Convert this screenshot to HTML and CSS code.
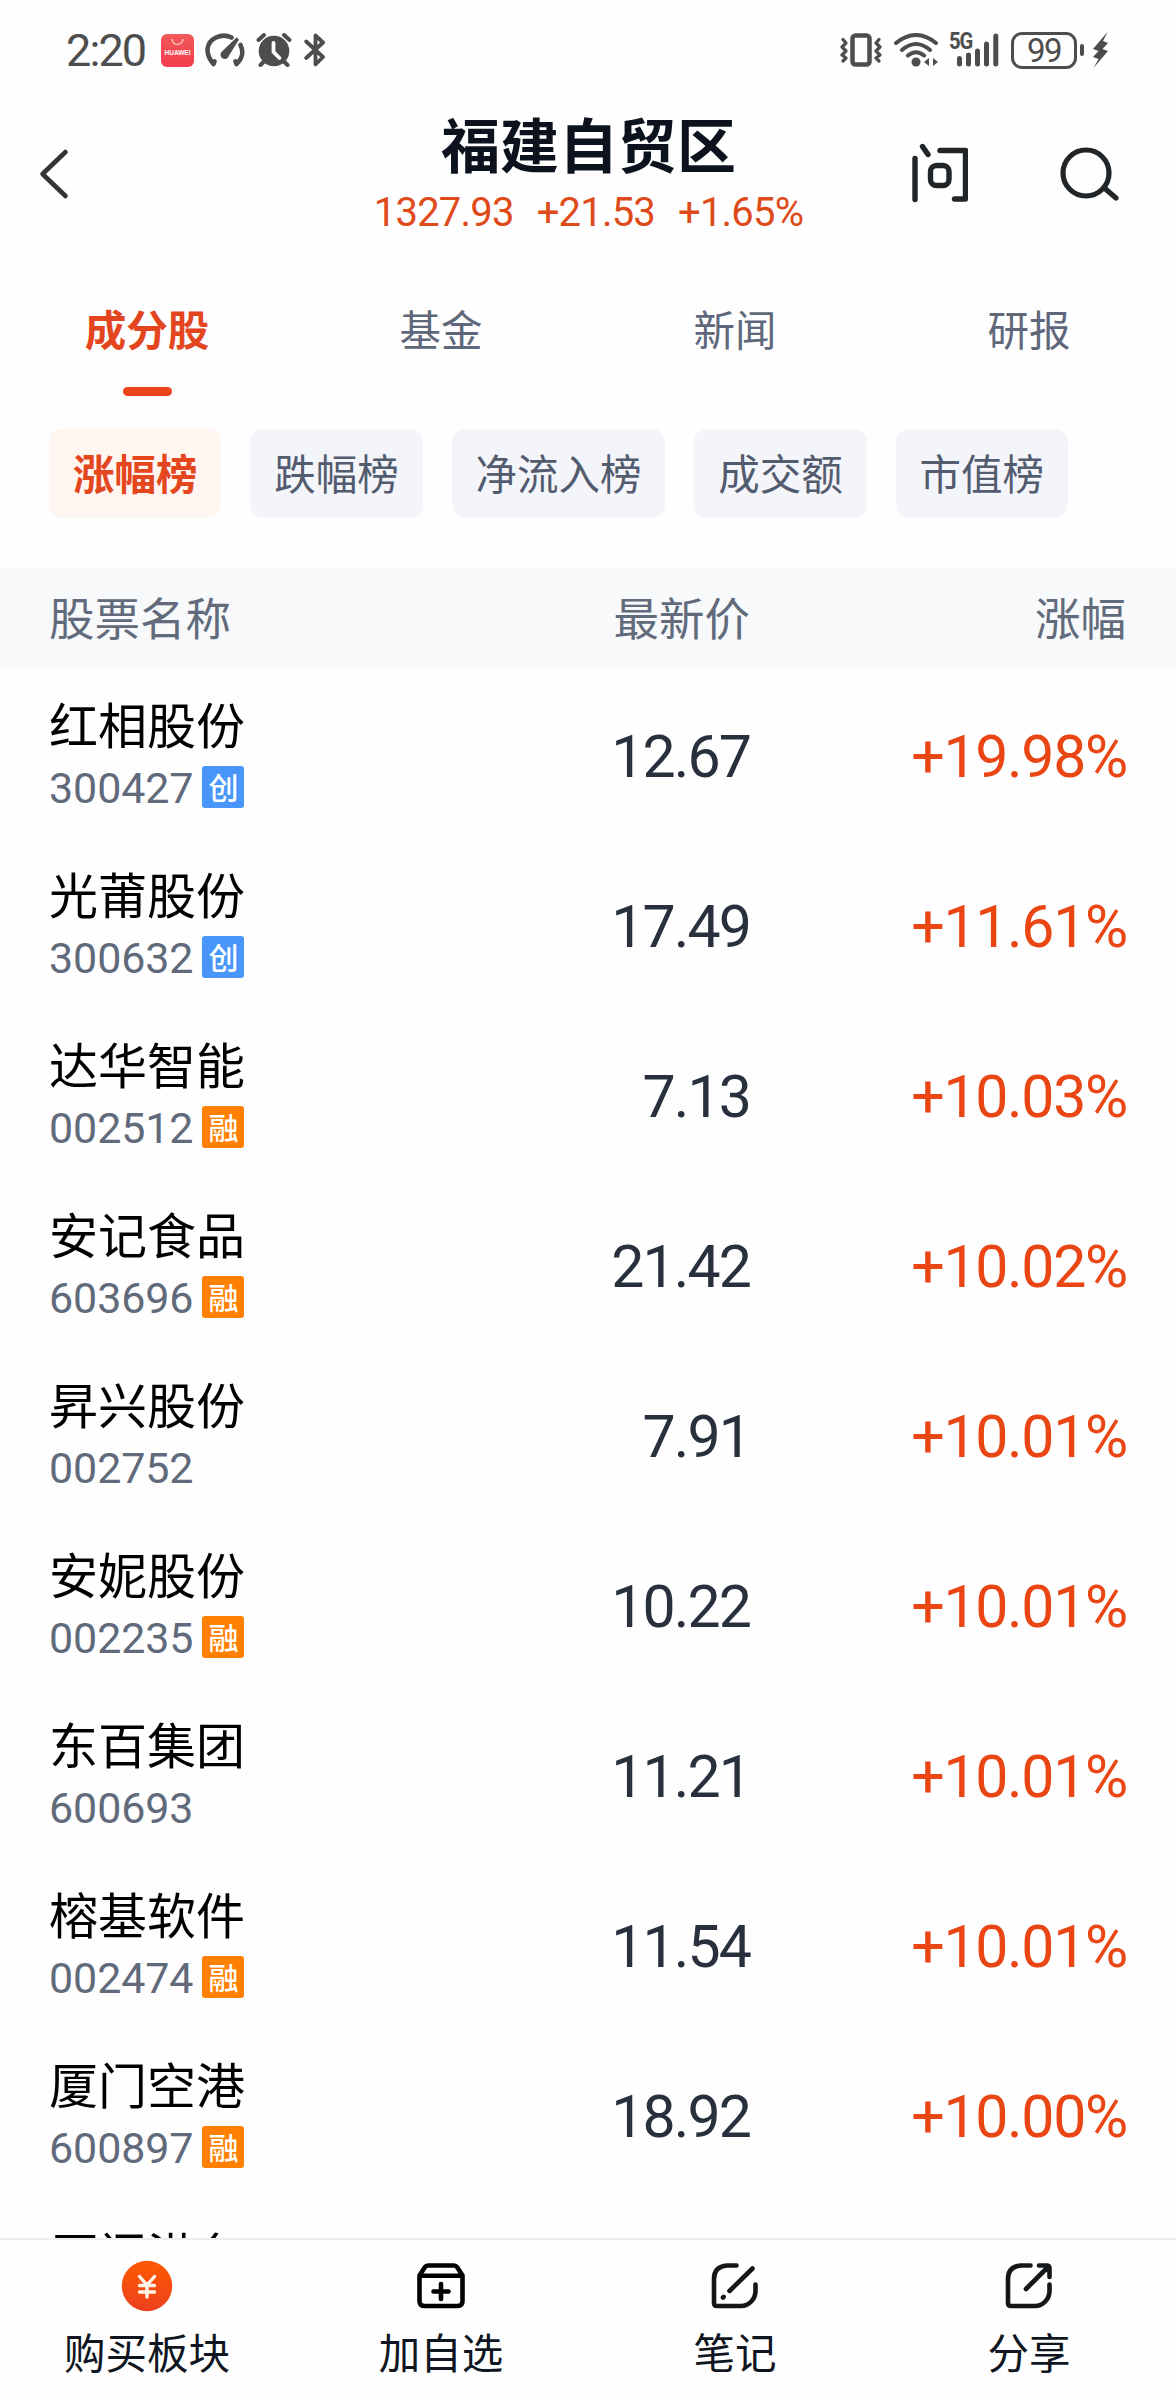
FILE: index.html
```html
<!DOCTYPE html>
<html lang="zh-CN">
<head>
<meta charset="utf-8">
<title>福建自贸区</title>
<link rel="stylesheet" href="styles.css">
</head>
<body>
<div class="screen">
  <div class="status">
    <div class="status-left">
      <span class="clock">2:20</span>
      <div class="appicon"><svg width="33" height="12" viewBox="0 0 33 12"><path d="M11 5a5.5 5.5 0 0 0 11 0" fill="none" stroke="#ffd9d6" stroke-width="1.2"/></svg><span>HUAWEI</span></div>
      <svg class="gauge" width="40" height="34" viewBox="0 0 40 34"><g fill="none" stroke="#4d4d4d" stroke-width="4.6" stroke-linecap="round"><path d="M8.500 31C-1 20 1.500 9 11 4.500C17 1.800 22 2.200 26.500 4.500M35.500 12C39 19 37 26 31.500 31M8.500 31l1-2.500M31.500 31l-1-2.500"/></g><path d="M31.500 4.500l2.500 2L24 22.500a4.300 4.300 0 1 1-6.500-4.500Z" fill="#4d4d4d"/></svg>
      <svg class="alarm" width="36" height="34" viewBox="0 0 36 34"><circle cx="18" cy="18" r="15.300" fill="#4d4d4d"/><g fill="none" stroke="#4d4d4d" stroke-width="4" stroke-linecap="round"><path d="M2.500 7l5.500-5M33.500 7l-5.500-5M7.500 29l-3 3M28.500 29l3 3"/></g><path d="M17.500 10v9l6 6" fill="none" stroke="#fff" stroke-width="3.800" stroke-linecap="round" stroke-linejoin="round"/></svg>
      <svg class="bt" width="22" height="34" viewBox="0 0 22 34"><path d="M2.200 8.500L19 24l-7.500 7.500V2.500L19 9.500L2.200 25" fill="none" stroke="#4d4d4d" stroke-width="3.800" stroke-linecap="round" stroke-linejoin="round"/></svg>
    </div>
    <div class="status-right">
      <svg width="42" height="34" viewBox="0 0 42 34"><g fill="none" stroke="#4d4d4d" stroke-width="3.200" stroke-linecap="round" stroke-linejoin="round"><path d="M3 6.500l3 3.500-4 4 4 4-4 4 4 3-3 3M39 6.500l-3 3.500 4 4-4 4 4 4-4 3 3 3"/></g><rect x="12.500" y="2.500" width="17" height="29" rx="3" fill="none" stroke="#4d4d4d" stroke-width="4.500"/></svg>
      <svg class="wifi" width="44" height="34" viewBox="0 0 44 34"><g fill="none" stroke="#4d4d4d" stroke-width="4" stroke-linecap="round"><path d="M2 10Q22-6 42 10M8 17Q22 5 36 17M14 22.500Q22 16 30 22.500"/></g><circle cx="22" cy="29" r="4.500" fill="#4d4d4d"/><path d="M30 29l5-4v8zM44 29l-5-4v8z" fill="#4d4d4d"/></svg>
      <div class="signal"><span>5G</span><svg width="50" height="34" viewBox="0 0 50 34"><g stroke="#4d4d4d" stroke-width="5" stroke-linecap="round"><path d="M10.500 25.500v5.500M19.500 22v9M28.500 18v13M37.500 11v20M46.800 3v28"/></g></svg></div>
      <div class="battery">99</div>
      <svg width="4" height="12"><rect width="4" height="12" rx="2" fill="#4d4d4d"/></svg>
      <svg class="bolt" width="17" height="38" viewBox="0 0 17 38"><path d="M15.500 1L1 18l5.500 2L1 26l5.500 2L1.500 37 16 20l-5.500-2 5.500-6-5-2z" fill="#4d4d4d"/></svg>
    </div>
  </div>

  <header class="topbar">
    <svg class="back" width="30" height="54" viewBox="0 0 30 54"><path d="M26.500 5L3.500 27l23 22" fill="none" stroke="#333" stroke-width="4.600" stroke-linecap="round" stroke-linejoin="round"/></svg>
    <div class="heading">
      <h1>福建自贸区</h1>
      <p class="quote"><span>1327.93</span><span>+21.53</span><span>+1.65%</span></p>
    </div>
    <div class="actions">
      <svg width="56" height="62" viewBox="0 0 56 62"><g fill="none" stroke="#212528" stroke-width="5.400" stroke-linecap="round" stroke-linejoin="round"><path d="M3 16.500v41M10.500 4.500l5.500 8M28 8.500h25.500V57H42.500"/><rect x="18.500" y="23.500" width="18.500" height="20" rx="6"/></g></svg>
      <svg width="60" height="62" viewBox="0 0 60 62"><g fill="none" stroke="#212528" stroke-width="5.200" stroke-linecap="round"><circle cx="27" cy="31" r="23"/><path d="M46.500 47l10.500 9"/></g></svg>
    </div>
  </header>

  <nav class="tabs">
    <div class="tab active">成分股</div><div class="tab">基金</div><div class="tab">新闻</div><div class="tab">研报</div>
  </nav>

  <div class="chips">
    <div class="chip active">涨幅榜</div><div class="chip">跌幅榜</div><div class="chip">净流入榜</div><div class="chip">成交额</div><div class="chip">市值榜</div>
  </div>

  <div class="columns"><span>股票名称</span><span>最新价</span><span>涨幅</span></div>

  <main class="list">
    <div class="row"><div class="stock"><div class="name">红相股份</div><div class="code">300427<i class="tag cyb">创</i></div></div><div class="price">12.67</div><div class="change">+19.98%</div></div>
    <div class="row"><div class="stock"><div class="name">光莆股份</div><div class="code">300632<i class="tag cyb">创</i></div></div><div class="price">17.49</div><div class="change">+11.61%</div></div>
    <div class="row"><div class="stock"><div class="name">达华智能</div><div class="code">002512<i class="tag">融</i></div></div><div class="price">7.13</div><div class="change">+10.03%</div></div>
    <div class="row"><div class="stock"><div class="name">安记食品</div><div class="code">603696<i class="tag">融</i></div></div><div class="price">21.42</div><div class="change">+10.02%</div></div>
    <div class="row"><div class="stock"><div class="name">昇兴股份</div><div class="code">002752</div></div><div class="price">7.91</div><div class="change">+10.01%</div></div>
    <div class="row"><div class="stock"><div class="name">安妮股份</div><div class="code">002235<i class="tag">融</i></div></div><div class="price">10.22</div><div class="change">+10.01%</div></div>
    <div class="row"><div class="stock"><div class="name">东百集团</div><div class="code">600693</div></div><div class="price">11.21</div><div class="change">+10.01%</div></div>
    <div class="row"><div class="stock"><div class="name">榕基软件</div><div class="code">002474<i class="tag">融</i></div></div><div class="price">11.54</div><div class="change">+10.01%</div></div>
    <div class="row"><div class="stock"><div class="name">厦门空港</div><div class="code">600897<i class="tag">融</i></div></div><div class="price">18.92</div><div class="change">+10.00%</div></div>
    <div class="row"><div class="stock"><div class="name">厦门港务</div></div></div>
  </main>

  <footer class="toolbar">
    <div class="tool"><svg width="52" height="52" viewBox="0 0 52 52"><defs><linearGradient id="coin" x2="0" y2="1"><stop stop-color="#ff5a00"/><stop offset="1" stop-color="#ec401e"/></linearGradient></defs><circle cx="26" cy="26" r="25.200" fill="url(#coin)"/><path d="M18.500 16.500L26 25l7.500-8.500M26 25v12M18.500 25.500h15M18.500 32h15" fill="none" stroke="#fff4ea" stroke-width="3.400" stroke-linecap="round"/></svg>购买板块</div>
    <div class="tool"><svg width="52" height="52" viewBox="0 0 52 52"><g fill="none" stroke="#000" stroke-width="4.600" stroke-linecap="round" stroke-linejoin="round"><path d="M4.500 15.500L10 7Q11 5.500 13 5.500H39Q41 5.500 42 7L47.500 15.500V41Q47.500 46 42.500 46H9.500Q4.500 46 4.500 41ZM5 15.800h42M26 24v15M18.500 31.500h15"/></g></svg>加自选</div>
    <div class="tool"><svg width="52" height="52" viewBox="0 0 52 52"><g fill="none" stroke="#14171a" stroke-width="4.600" stroke-linecap="round" stroke-linejoin="round"><path d="M27.500 5.500H18Q5 6.500 5 19V43Q5 46 8 46H32C40 46 46.500 39 46.500 31V24.500M43.500 8.500L20.500 31M14 37.500l.6-.6"/></g></svg>笔记</div>
    <div class="tool"><svg width="52" height="52" viewBox="0 0 52 52"><g fill="none" stroke="#14171a" stroke-width="4.600" stroke-linecap="round" stroke-linejoin="round"><path d="M27.500 5.500H18Q5 6.500 5 19V43Q5 46 8 46H32C40 46 46.500 39 46.500 31V24.500M23 29L45 7M36 5.500H43.500Q46.500 5.500 46.500 8.500V17"/></g></svg>分享</div>
  </footer>
</div>
</body>
</html>
```

FILE: styles.css
```css
* { box-sizing: border-box; margin: 0; padding: 0; }

body {
  font-family: "Noto Sans CJK SC", sans-serif;
  background: #fff;
}

svg { display: block; flex: none; }

.screen {
  display: flex;
  flex-direction: column;
  width: 1176px;
  height: 2400px;
  background: #fefefe;
  overflow: hidden;
}

/* status bar */
.status {
  display: flex;
  justify-content: space-between;
  flex: none;
  height: 100px;
  padding: 0 67px 0 66px;
  color: #4d4d4d;
}
.status-left, .status-right { display: flex; align-items: center; height: 100px; }
.clock {
  width: 95px;
  font: 400 45px/45px Roboto, sans-serif;
  letter-spacing: -1.9px;
}
.appicon {
  width: 33px;
  height: 33px;
  margin-right: 11px;
  border-radius: 6px;
  background: linear-gradient(#f0595a, #f43c4e);
  color: #fff;
  font: 700 6.5px/8px "Liberation Sans", sans-serif;
  text-align: center;
}
.appicon span { display: block; margin-top: 3px; }
.gauge { margin-right: 11px; }
.alarm { margin-right: 12px; }
.wifi { margin: 0 11px 0 12px; }
.signal { position: relative; width: 50px; margin-right: 12px; }
.signal span {
  position: absolute;
  top: -2px;
  left: 0;
  font: 700 23px/22px Roboto, sans-serif;
  letter-spacing: -1.2px;
  transform-origin: left;
  transform: scaleX(.88);
}
.battery {
  width: 66px;
  height: 37px;
  margin-right: 3px;
  border: 3px solid #4d4d4d;
  border-radius: 11px;
  font: 400 33px/32px Roboto, sans-serif;
  letter-spacing: -1.5px;
  text-align: center;
}
.bolt { margin-left: 8px; }

/* title bar */
.topbar {
  display: grid;
  grid-template-columns: 1fr auto 1fr;
  flex: none;
  height: 176px;
  padding: 0 57px 0 39px;
}
.back { margin-top: 47px; }
.heading { text-align: center; padding-left: 19px; }
.heading h1 {
  height: 86px;
  color: #0c121e;
  font-size: 59px;
  font-weight: 700;
  line-height: 86px;
}
.quote {
  display: flex;
  justify-content: center;
  gap: 23px;
  color: #df4a1a;
  font: 400 40px/53px Roboto, sans-serif;
  letter-spacing: -.8px;
}
.actions { display: flex; justify-content: flex-end; gap: 91px; padding-top: 42px; }

/* section tabs */
.tabs { display: grid; grid-template-columns: repeat(4, 1fr); flex: none; height: 153px; }
.tab {
  display: flex;
  flex-direction: column;
  align-items: center;
  padding-top: 22px;
  color: #5f687a;
  font-size: 41.5px;
  line-height: 60px;
}
.tab.active { color: #e3461f; font-weight: 700; }
.tab.active::after {
  content: "";
  width: 49px;
  height: 9px;
  margin-top: 29px;
  border-radius: 5px;
  background: #ed431b;
}

/* ranking filters */
.chips { display: flex; gap: 29px; flex: none; height: 138px; padding-left: 49px; }
.chip {
  height: 89px;
  padding: 0 23.9px;
  border-radius: 13px;
  background: #f4f5fa;
  color: #535c6f;
  font-size: 41.5px;
  line-height: 87px;
}
.chip.active { background: #fff5f1; color: #e4461d; font-weight: 700; }

/* stock table */
.columns, .row {
  display: grid;
  grid-template-columns: 401px 300px 1fr;
  align-items: center;
  padding: 0 49px;
}
.columns {
  flex: none;
  height: 102px;
  padding-bottom: 4px;
  background: #f7f9fb;
  color: #626b7b;
  font-size: 45.5px;
}
.columns span:not(:first-child) { text-align: right; }
.columns span:last-child { padding-right: 1px; }
.list { flex: 1; min-height: 0; overflow: hidden; }
.row { height: 170px; }
.stock { height: 170px; padding-top: 20px; }
.name { height: 72px; color: #000; font-size: 49px; line-height: 67px; }
.code {
  display: flex;
  align-items: center;
  gap: 9px;
  height: 54px;
  color: #616a7b;
  font: 400 43px/54px Roboto, sans-serif;
  letter-spacing: -.1px;
}
.tag {
  width: 42px;
  height: 42px;
  margin-top: -3px;
  border-radius: 3px;
  background: #ff8000;
  color: #fff;
  font: 500 30px/41px "Noto Sans CJK SC", sans-serif;
  letter-spacing: 0;
  text-align: center;
}
.tag.cyb { background: #4896f9; }
.price, .change {
  text-align: right;
  font: 400 59px/70px Roboto, sans-serif;
  letter-spacing: -1.3px;
  padding-top: 5px;
}
.price { color: #28303e; letter-spacing: -1.9px; }
.change { color: #e94614; }

/* bottom toolbar */
.toolbar {
  display: grid;
  grid-template-columns: repeat(4, 1fr);
  flex: none;
  height: 162px;
  border-top: 2px solid #ecedf1;
}
.tool {
  display: flex;
  flex-direction: column;
  align-items: center;
  gap: 9px;
  padding-top: 20px;
  color: #0f1621;
  font-size: 41.5px;
  line-height: 60px;
}
```
